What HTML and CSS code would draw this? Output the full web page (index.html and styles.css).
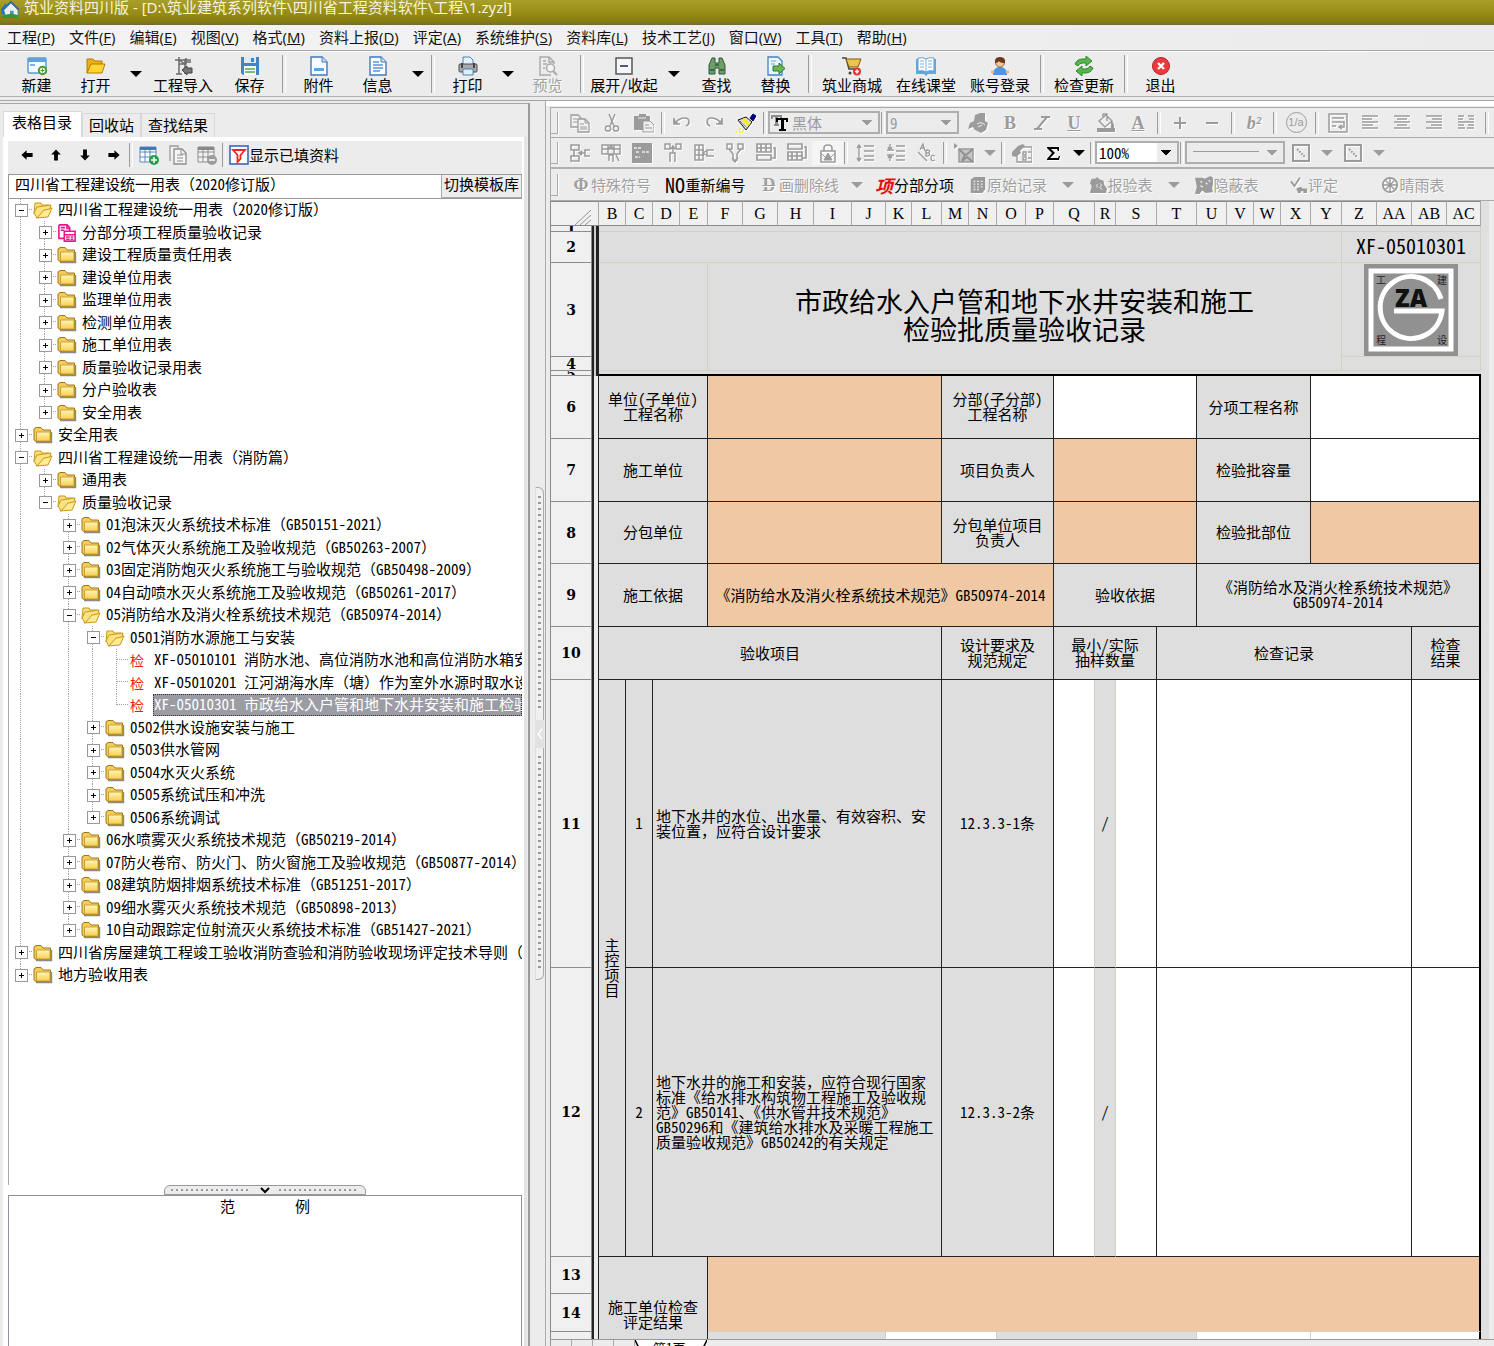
FILE: index.html
```html
<!DOCTYPE html>
<html lang="zh-CN">
<head>
<meta charset="utf-8">
<title>筑业资料四川版</title>
<link rel="stylesheet" href="styles.css">
</head>
<body>
<svg class="defs" aria-hidden="true">
  <defs>
    <linearGradient id="gold" x1="0" y1="0" x2="0" y2="1"><stop offset="0" stop-color="#fff6bc"/><stop offset="1" stop-color="#f8cf4e"/></linearGradient>
  </defs>
  <symbol id="house" viewBox="0 0 20 20"><path d="M0 10l5-6 5 6v6H1z" fill="#1976c8"/><path d="M3 11L11 3l8 8v7H5z" fill="#e8eef4" stroke="#4a7aa0"/><path d="M2 11l9-9 9 9" fill="none" stroke="#3a6a9a" stroke-width="2"/><path d="M10 12h4v6h-4z" fill="#4a8ad0"/><path d="M1 18q9-5 18-1v3H1z" fill="#2f9a35"/></symbol>
  <symbol id="new" viewBox="0 0 20 20"><rect x="1" y="2" width="18" height="15" rx="1" fill="#f6faff" stroke="#5b9bd5" stroke-width="1.5"/><path d="M1 2h18v4H1z" fill="#5fa3dd"/><path d="M3 9h5" stroke="#5b9bd5" stroke-width="1.5"/><circle cx="15.500" cy="14.500" r="3.700" fill="#fff" stroke="#4d9a30" stroke-width="2"/><path d="M13.500 14.500h4M15.500 12.500v4" stroke="#4d9a30"/></symbol>
  <symbol id="open" viewBox="0 0 20 20"><path d="M1 17V3h6l2 2h7v3" fill="#e9b117" stroke="#b47d00"/><path d="M1 17l4-9h14l-3 9z" fill="#ffd433" stroke="#b47d00"/></symbol>
  <symbol id="import" viewBox="0 0 20 20"><path d="M2 4h16M6 1v17M3 18h6M6 8h7V2M12 3v15M12 6h6M6 4l6 4" fill="none" stroke="#6b6b6b" stroke-width="1.500"/><path d="M9 14l5-4v2h5v5h-5v2z" fill="#777" stroke="#444"/></symbol>
  <symbol id="save" viewBox="0 0 20 20"><path d="M1 1h18v18H3l-2-2z" fill="#3f86c8"/><path d="M4 1h12v6H4z" fill="#d9ebf8"/><path d="M11 2h3v4h-3z" fill="#3f86c8"/><path d="M4 10h12v9H4z" fill="#fff"/><path d="M5 13h10M5 16h10" stroke="#52ad3a" stroke-width="1.600"/></symbol>
  <symbol id="doc1" viewBox="0 0 20 20"><path d="M2 1h11l5 5v13H2z" fill="#fafcff" stroke="#3f78bd" stroke-width="1.400"/><path d="M13 1v5h5" fill="#cfe2f5" stroke="#3f78bd"/><path d="M5 12h10v3H5z" fill="#58a6e8"/></symbol>
  <symbol id="doc2" viewBox="0 0 20 20"><path d="M2 1h11l5 5v13H2z" fill="#fafcff" stroke="#3f78bd" stroke-width="1.400"/><path d="M13 1v5h5" fill="#cfe2f5" stroke="#3f78bd"/><path d="M5 6h6M5 9h10M5 12h10M5 15h7" stroke="#5b95d5" stroke-width="1.400"/></symbol>
  <symbol id="print" viewBox="0 0 20 20"><path d="M5 8V1h7l3 3v4" fill="#e5f2ff" stroke="#4a80ba"/><rect x="1" y="8" width="18" height="8" rx="1" fill="#aaa" stroke="#4e4e4e"/><path d="M4 7v5M16 7v5" stroke="#444" stroke-width="2"/><path d="M5 13h10v6H5z" fill="#dcefff" stroke="#4a80ba"/></symbol>
  <symbol id="preview" viewBox="0 0 20 20"><path d="M13 19H2V1h9l5 5v2M11 1v5h5M5 5h3M5 8h4M5 12h2" fill="none" stroke="#a9a9a9" stroke-width="1.400"/><circle cx="12.500" cy="12" r="4" fill="#f3f3f3" stroke="#a9a9a9" stroke-width="1.500"/><path d="M15 15l4 4" stroke="#a9a9a9" stroke-width="2"/></symbol>
  <symbol id="collapse" viewBox="0 0 20 20"><rect x="2" y="2" width="16" height="16" fill="#f5f6fb" stroke="#555" stroke-width="1.500"/><path d="M6 10h8" stroke="#334" stroke-width="1.600"/></symbol>
  <symbol id="find" viewBox="0 0 20 20"><path d="M2 9l3-7h3v5h4V2h3l3 7v9h-6v-6H8v6H2z" fill="#6f9d68" stroke="#2f5a33"/><path d="M3 14h4M13 14h4M8 9h4" stroke="#2f5a33" stroke-width="1.500"/></symbol>
  <symbol id="replace" viewBox="0 0 20 20"><path d="M2 1h10l4 4v14H2z" fill="#eef6ff" stroke="#4084ca" stroke-width="1.300"/><path d="M5 5h5M5 8h4" stroke="#58a0dd"/><path d="M7 10h6V7l6 5.500-6 5.500v-3H7z" fill="#68b552" stroke="#2c7a2a"/></symbol>
  <symbol id="cart" viewBox="0 0 20 20"><path d="M0 2h4l3 11h10" fill="none" stroke="#444" stroke-width="1.500"/><path d="M4 3h15l-3 8H7z" fill="#edc34b" stroke="#7d5a16"/><circle cx="8" cy="17" r="1.500" fill="#444"/><circle cx="15" cy="15.500" r="4" fill="#e53434"/><path d="M13 15.500h4M15 13.500v4" stroke="#fff" stroke-width="1.500"/></symbol>
  <symbol id="book" viewBox="0 0 20 20"><path d="M0 3h20v15h-8l-2 2-2-2H0z" fill="#62a7e0"/><path d="M2 2q5-1 8 1 3-2 8-1v13q-5-1-8 1-3-2-8-1z" fill="#fff" stroke="#5b9fd9"/><path d="M10 3v13M4 5h4M4 8h4M4 11h4M12 5h4M12 8h4M12 11h4" stroke="#78b0df"/></symbol>
  <symbol id="user" viewBox="0 0 20 20"><path d="M3 19q0-8 7-8t7 8z" fill="#4a97e5"/><circle cx="10" cy="6.500" r="4.500" fill="#f3c79a" stroke="#a06432"/><path d="M5 7q-1-6 5-6t5 6q-5 0-6-2-1 2-4 2z" fill="#6a3a19"/><circle cx="2.500" cy="16" r="1.800" fill="#eab681"/><circle cx="17.500" cy="16" r="1.800" fill="#eab681"/></symbol>
  <symbol id="update" viewBox="0 0 20 20"><path d="M1 8q2-5 8-5h3V0l6 5-6 5V7H9q-4 0-5 3z" fill="#56b54c" stroke="#2e8a33"/><path d="M19 12q-2 5-8 5H8v3l-6-5 6-5v3h3q4 0 5-3z" fill="#56b54c" stroke="#2e8a33"/></symbol>
  <symbol id="quit" viewBox="0 0 20 20"><circle cx="10" cy="10" r="8.500" fill="#e83a40" stroke="#b82226"/><path d="M7 7l6 6M13 7l-6 6" stroke="#fff" stroke-width="2.400"/></symbol>
  <symbol id="arr" viewBox="0 0 20 20"><path d="M3 10l6.500-6v3.600H17v4.800H9.500V16z" fill="#000"/></symbol>
  <symbol id="gridadd" viewBox="0 0 20 20"><path d="M1 2h16v15H1zM1 7h16M1 12h16M6 3v14M11 3v14" fill="#fff" stroke="#5a86c0"/><path d="M1 2h16v3H1z" fill="#4275c2"/><circle cx="15" cy="15" r="5" fill="#21a04b"/><path d="M12 15h6M15 12v6" stroke="#fff" stroke-width="1.500"/></symbol>
  <symbol id="gridsub" viewBox="0 0 20 20"><path d="M1 2h16v15H1zM1 7h16M1 12h16M6 3v14M11 3v14" fill="#f2f2f2" stroke="#8d8d8d"/><path d="M1 2h16v3H1z" fill="#888"/><circle cx="15" cy="15" r="5" fill="#9b9b9b"/><path d="M12 15h6" stroke="#fff" stroke-width="1.500"/></symbol>
  <symbol id="copy" viewBox="0 0 20 20"><path d="M1 2h7l3 3v9H1z" fill="#f1f1f1" stroke="#9b9b9b" stroke-width="1.300"/><path d="M8 6h7l4 4v9H8z" fill="#f1f1f1" stroke="#9b9b9b" stroke-width="1.300"/><path d="M3 6h4M3 9h4M10 11h4M10 14h7M10 16h7M15 6v4h4" fill="none" stroke="#9b9b9b"/></symbol>
  <symbol id="sheets" viewBox="0 0 20 20"><path d="M2 16V1h8v2" fill="#f1f1f1" stroke="#9b9b9b" stroke-width="1.300"/><path d="M6 4h8l4 4v11H6z" fill="#f6f6f6" stroke="#8d8d8d" stroke-width="1.300"/><path d="M9 10h6M9 13h6M9 16h6M13 4v5h5" fill="none" stroke="#8d8d8d"/></symbol>
  <symbol id="filter" viewBox="0 0 20 20"><rect x="1" y="1" width="18" height="18" fill="#fff" stroke="#3d68b5" stroke-width="1.600"/><path d="M4 5h12l-4.500 5v4L8.500 17v-7z" fill="#fff" stroke="#f02424" stroke-width="1.800"/></symbol>
  <symbol id="folder" viewBox="0 0 20 18"><path d="M3 16.500h15.500V6" stroke="#8a8a8a" stroke-width="1.400" fill="none"/><path d="M1 14V3l2-1.500h5L10 4h7.500v11.500H3z" fill="#f3cd55" stroke="#a0761c"/><path d="M3.500 6h13.500v9H3.500z" fill="url(#gold)" stroke="#cda036"/></symbol>
  <symbol id="folderopen" viewBox="0 0 20 18"><path d="M1 13L2 2h6l1 2h7l-1 4" fill="#f8df7b" stroke="#c9971c"/><path d="M3 17l5-6 4-3 7-1-4 9z" fill="#ffeb91" stroke="#c9971c"/><path d="M1 12l3-6 14-2-1 4-6 1-7 8z" fill="#fbe382" stroke="#c9971c"/></symbol>
  <symbol id="pink" viewBox="0 0 20 20"><path d="M1 1h9l3 3v4M1 1v15h6M3 4h5M3 7h4M10 1v4h3" fill="none" stroke="#f0148c" stroke-width="1.800"/><path d="M7 8h12v11H7zM7 12h12M9 14.500h4M14 14.500h3M9 17h4M14 17h3" fill="#fff" stroke="#f0148c" stroke-width="1.800"/></symbol>
  <symbol id="cut" viewBox="0 0 20 20"><path d="M7 1l5 12M13 1L8 13" stroke="#9b9b9b" stroke-width="1.500"/><circle cx="6" cy="15.500" r="2.600" fill="none" stroke="#9b9b9b" stroke-width="1.500"/><circle cx="14" cy="15.500" r="2.600" fill="none" stroke="#9b9b9b" stroke-width="1.500"/></symbol>
  <symbol id="paste" viewBox="0 0 20 20"><path d="M0 3h5V1h7v2h4v14H0z" fill="#9b9b9b"/><path d="M4 5h8" stroke="#eee"/><path d="M9 8h7l4 4v7H9z" fill="#eee" stroke="#9b9b9b"/><path d="M11 12h4M11 15h7" stroke="#9b9b9b"/></symbol>
  <symbol id="undo" viewBox="0 0 20 20"><path d="M2 5v6h6M3 10q4-5 10-5 4 0 4 4 0 3-3 4" fill="none" stroke="#9b9b9b" stroke-width="1.600"/><path d="M2 6v5h5z" fill="#9b9b9b"/></symbol>
  <symbol id="brush" viewBox="0 0 20 20"><path d="M14 5l3-4 3 2-3 5z" fill="#000090" stroke="#000060"/><path d="M2 7l8-3 6 5-6 8z" fill="#dedede" stroke="#111"/><path d="M7 6l6 6" stroke="#f8f000" stroke-width="3"/><path d="M4 8l7 7" stroke="#555" stroke-dasharray="1 1"/><path d="M0 19h1M3 19h2M6 19h1M3 16h2M7 17h1" stroke="#f5ee00" stroke-width="1.500"/></symbol>
  <symbol id="tt" viewBox="0 0 20 20"><path d="M1 3h11v4h-2V5H8v7h1v2H4v-2h1V5H3v2H1z" fill="#8c8c8c"/><path d="M6 6h12v4h-2V8h-2v9h2v2H9v-2h2V8H8v2H6z" fill="#000"/></symbol>
  <symbol id="hand" viewBox="0 0 20 20"><path d="M7 2l5-2h5v8l3 2-2 7-5 3-6-3-2-3-5 2 2-6 4-2z" fill="#9b9b9b"/><path d="M9 11q4-3 8 1M10 14l4-2" stroke="#eee" fill="none"/></symbol>
  <symbol id="bucket" viewBox="0 0 20 20"><path d="M3 8l7-6 6 6-7 6zM7 5V1h4v7" fill="#eee" stroke="#9b9b9b" stroke-width="1.400"/><path d="M15 7q4 4 3 8h-3zM1 15h18v4H1z" fill="#9b9b9b"/></symbol>
  <symbol id="plus" viewBox="0 0 20 20"><path d="M4 10h12M10 4v12" stroke="#9b9b9b" stroke-width="2"/></symbol>
  <symbol id="minus" viewBox="0 0 20 20"><path d="M4 10h12" stroke="#9b9b9b" stroke-width="2"/></symbol>
  <symbol id="wrap" viewBox="0 0 20 20"><path d="M1 1h18v18H1zM4 5h12M4 9h12v5h-4M4 13h4M14 12l-3 2 3 2" fill="none" stroke="#9b9b9b" stroke-width="1.500"/></symbol>
  <symbol id="alignl" viewBox="0 0 20 20"><path d="M2 3h16M2 6h10M2 9h16M2 12h11M2 15h16" stroke="#9b9b9b" stroke-width="1.500"/></symbol>
  <symbol id="alignc" viewBox="0 0 20 20"><path d="M2 3h16M5 6h10M2 9h16M5 12h10M2 15h16" stroke="#9b9b9b" stroke-width="1.500"/></symbol>
  <symbol id="alignr" viewBox="0 0 20 20"><path d="M2 3h16M8 6h10M2 9h16M7 12h11M2 15h16" stroke="#9b9b9b" stroke-width="1.500"/></symbol>
  <symbol id="alignj" viewBox="0 0 20 20"><path d="M2 3h6M12 3h6M2 6h5M13 6h5M2 9h16M2 12h6M12 12h6M2 15h7M11 15h7" stroke="#9b9b9b" stroke-width="1.500"/></symbol>
  <symbol id="g1" viewBox="0 0 20 20"><path d="M1 2h8v5H1zM1 13h8v5H1zM4 7v6M20 7h-5v6h5M9 10h6M12 8l-3 2 3 2" fill="none" stroke="#9b9b9b" stroke-width="1.600"/></symbol>
  <symbol id="g2" viewBox="0 0 20 20"><path d="M1 2h18v9H1zM1 6h18M7 2v9M13 2v9M7 6l3-3 3 3M8 18v-6h4v7M15 12l3 6" fill="none" stroke="#9b9b9b" stroke-width="1.500"/></symbol>
  <symbol id="g3" viewBox="0 0 20 20"><path d="M0 0h20v20H0z" fill="#9b9b9b"/><path d="M2 5h7M4 9h4M10 9h7M3 14h5" stroke="#eee" stroke-width="1.500" stroke-dasharray="3 1"/></symbol>
  <symbol id="g4" viewBox="0 0 20 20"><path d="M2 1h5v5H2zM13 1h5v5h-5zM7 19v-9h5v9M10 10V4M8 6l2-3 2 3" fill="none" stroke="#9b9b9b" stroke-width="1.500"/></symbol>
  <symbol id="g5" viewBox="0 0 20 20"><path d="M1 2h8v15H1zM5 2v15M1 7h9M1 12h9M20 7h-7v6h7M12 8l-3 2 3 2" fill="none" stroke="#9b9b9b" stroke-width="1.500"/></symbol>
  <symbol id="g6" viewBox="0 0 20 20"><path d="M2 1h5v5H2zM13 1h5v5h-5zM4 6l4 5v6h4v-6l4-5M7 15l3 4 3-4" fill="none" stroke="#9b9b9b" stroke-width="1.500"/></symbol>
  <symbol id="g7" viewBox="0 0 20 20"><path d="M1 1h14v8H1zM1 5h14M5 1v8M10 1v8M1 12h14v5H1zM17 5h2v10h-3" fill="none" stroke="#9b9b9b" stroke-width="1.700"/></symbol>
  <symbol id="g8" viewBox="0 0 20 20"><path d="M1 1h14v5H1zM1 9h14v8H1zM1 13h14M5 9v8M10 9v8M17 4h2v11h-3" fill="none" stroke="#9b9b9b" stroke-width="1.700"/></symbol>
  <symbol id="lock" viewBox="0 0 20 20"><path d="M6 8V5q0-3 4-3t4 3v3M3 8h14v11H3z" fill="none" stroke="#9b9b9b" stroke-width="1.600"/><path d="M6 17l4-7 4 7zM4 11l3 3M16 11l-3 3" stroke="#9b9b9b" fill="#9b9b9b"/></symbol>
  <symbol id="ls1" viewBox="0 0 20 20"><path d="M4 2v16M2 5l2-3 2 3M2 15l2 3 2-3M9 3h10M9 8h10M9 13h10M9 17h10" fill="none" stroke="#9b9b9b" stroke-width="1.400"/></symbol>
  <symbol id="ls2" viewBox="0 0 20 20"><path d="M1 7h7M4 1v6M2 4l2 3 2-3M1 12h7M4 18v-6M2 15l2-3 2 3M10 3h9M10 8h9M10 13h9M10 17h9" fill="none" stroke="#9b9b9b" stroke-width="1.400"/></symbol>
  <symbol id="abc" viewBox="0 0 20 20"><path d="M3 7l3-6 2 7M4 5h3M9 7v6q5 0 3-3 2-3-3-3M9 10h3M18 13q-4-2-4 2t4 2M1 9l9 9" fill="none" stroke="#9b9b9b" stroke-width="1.300"/></symbol>
  <symbol id="pic" viewBox="0 0 20 20"><path d="M0 0l4 3-4 3z" fill="#9b9b9b"/><path d="M5 6h14v13H5z" fill="#c4c4c4" stroke="#9b9b9b" stroke-width="1.500"/><path d="M5 6l6 6-3 6 5-4 6 5M19 6l-7 6" fill="none" stroke="#8f8f8f" stroke-width="1.800"/></symbol>
  <symbol id="form" viewBox="0 0 20 20"><path d="M8 4h12v15H5v-6M11 9h3v3h-3zM16 9h3M11 14h3v3h-3zM16 15h3" fill="none" stroke="#9b9b9b" stroke-width="1.400"/><path d="M0 9l6-6 5-2 2 2-5 5 1 2-5 4-4-1z" fill="#9b9b9b"/></symbol>
  <symbol id="sigma" viewBox="0 0 20 20"><path d="M4 4h12v4h-1l-1-2H8l4 4-5 5h8l1-2h1l-1 4H4v-1l5-6-5-5z" fill="#000"/></symbol>
  <symbol id="cell" viewBox="0 0 20 20"><path d="M2 2h16v16H2z" fill="none" stroke="#9b9b9b" stroke-width="2"/><path d="M6 6l8 8" stroke="#9b9b9b" stroke-width="2" stroke-dasharray="2 1"/></symbol>
  <symbol id="book2" viewBox="0 0 20 20"><path d="M2 4l4-3h12v14l-3 4H2z" fill="#9b9b9b"/><path d="M5 6h2M9 6h2M13 6h2M5 9h2M9 9h2M13 9h2M5 12h2M9 12h2M5 15h2M9 15h2M13 12h2" stroke="#eee" stroke-width="1.500"/></symbol>
  <symbol id="seal" viewBox="0 0 20 20"><path d="M3 3h4l2-2 3 3 4 1 1 5 3 4-1 5H4l-3 0 2-8-2-3z" fill="#9b9b9b"/><path d="M9 9v4M12 8l2 2-2 3 3 2" stroke="#eee" fill="none"/></symbol>
  <symbol id="hide" viewBox="0 0 20 20"><path d="M0 2h8l3 1 6-3 3 2v7l-1 5 1 4-8 1-4-3-3 4H0l2-8z" fill="#9b9b9b"/><path d="M6 6l2 1M12 8l2 1M6 11l3 1M15 5l2 1" stroke="#eee" stroke-width="1.500"/></symbol>
  <symbol id="check" viewBox="0 0 20 20"><path d="M1 6l4 5 6-9" fill="none" stroke="#9b9b9b" stroke-width="2"/><path d="M7 14l5-2 2 2h5v5h-4v-2h-3v2H9z" fill="#9b9b9b"/></symbol>
  <symbol id="globe" viewBox="0 0 20 20"><circle cx="10" cy="10" r="8" fill="none" stroke="#9b9b9b" stroke-width="2"/><path d="M10 2v16M2 10h16M5 5l10 10M15 5L5 15" stroke="#9b9b9b" stroke-width="1.500"/></symbol>
</svg>

<header class="titlebar"><svg class="ic"><use href="#house"/></svg><span>筑业资料四川版 - [D:\筑业建筑系列软件\四川省工程资料软件\工程\1.zyzl]</span></header>
<nav class="menu">
  <a href="#">工程(<u>P</u>)</a><a href="#">文件(<u>F</u>)</a><a href="#">编辑(<u>E</u>)</a><a href="#">视图(<u>V</u>)</a><a href="#">格式(<u>M</u>)</a><a href="#">资料上报(<u>D</u>)</a><a href="#">评定(<u>A</u>)</a><a href="#">系统维护(<u>S</u>)</a><a href="#">资料库(<u>L</u>)</a><a href="#">技术工艺(<u>J</u>)</a><a href="#">窗口(<u>W</u>)</a><a href="#">工具(<u>T</u>)</a><a href="#">帮助(<u>H</u>)</a>
</nav>
<div class="toolbar">
  <button class="tb"><svg class="ic"><use href="#new"/></svg>新建</button>
  <button class="tb"><svg class="ic"><use href="#open"/></svg>打开</button>
  <button class="drop" aria-label="打开选项"></button>
  <button class="tb wide"><svg class="ic"><use href="#import"/></svg>工程导入</button>
  <button class="tb"><svg class="ic"><use href="#save"/></svg>保存</button>
  <i class="sep"></i>
  <button class="tb"><svg class="ic"><use href="#doc1"/></svg>附件</button>
  <button class="tb"><svg class="ic"><use href="#doc2"/></svg>信息</button>
  <button class="drop" aria-label="信息选项"></button>
  <i class="sep"></i>
  <button class="tb"><svg class="ic"><use href="#print"/></svg>打印</button>
  <button class="drop" aria-label="打印选项"></button>
  <button class="tb off"><svg class="ic"><use href="#preview"/></svg>预览</button>
  <i class="sep"></i>
  <button class="tb wide"><svg class="ic"><use href="#collapse"/></svg>展开/收起</button>
  <button class="drop big" aria-label="展开选项"></button>
  <button class="tb"><svg class="ic"><use href="#find"/></svg>查找</button>
  <button class="tb"><svg class="ic"><use href="#replace"/></svg>替换</button>
  <i class="sep"></i>
  <button class="tb wide"><svg class="ic"><use href="#cart"/></svg>筑业商城</button>
  <button class="tb wide"><svg class="ic"><use href="#book"/></svg>在线课堂</button>
  <button class="tb wide"><svg class="ic"><use href="#user"/></svg>账号登录</button>
  <i class="sep"></i>
  <button class="tb wide"><svg class="ic"><use href="#update"/></svg>检查更新</button>
  <i class="sep"></i>
  <button class="tb"><svg class="ic"><use href="#quit"/></svg>退出</button>
</div>

<main class="main">
  <aside class="side">
    <div class="tabs"><button class="tab on">表格目录</button><button class="tab">回收站</button><button class="tab">查找结果</button></div>
    <div class="page">
      <div class="sidebar-tools">
        <button class="mini" aria-label="左移"><svg class="ic s"><use href="#arr"/></svg></button>
        <button class="mini" aria-label="上移"><svg class="ic s r1"><use href="#arr"/></svg></button>
        <button class="mini" aria-label="下移"><svg class="ic s r3"><use href="#arr"/></svg></button>
        <button class="mini" aria-label="右移"><svg class="ic s r2"><use href="#arr"/></svg></button>
        <i class="sep tight"></i>
        <button class="mini" aria-label="添加表"><svg class="ic"><use href="#gridadd"/></svg></button>
        <button class="mini" aria-label="复制表"><svg class="ic"><use href="#sheets"/></svg></button>
        <button class="mini" aria-label="删除表"><svg class="ic"><use href="#gridsub"/></svg></button>
        <i class="sep tight"></i>
        <button class="filled"><svg class="ic"><use href="#filter"/></svg>显示已填资料</button>
      </div>
      <div class="template"><input aria-label="模板库" value="四川省工程建设统一用表（2020修订版）"><button>切换模板库</button></div>
      <ul class="tree">
        <li><button class="ex open"></button><svg class="fi"><use href="#folderopen"/></svg><span>四川省工程建设统一用表（2020修订版）</span></li>
        <li><i class="g"></i><button class="ex"></button><svg class="fi"><use href="#pink"/></svg><span>分部分项工程质量验收记录</span></li>
        <li><i class="g"></i><button class="ex"></button><svg class="fi"><use href="#folder"/></svg><span>建设工程质量责任用表</span></li>
        <li><i class="g"></i><button class="ex"></button><svg class="fi"><use href="#folder"/></svg><span>建设单位用表</span></li>
        <li><i class="g"></i><button class="ex"></button><svg class="fi"><use href="#folder"/></svg><span>监理单位用表</span></li>
        <li><i class="g"></i><button class="ex"></button><svg class="fi"><use href="#folder"/></svg><span>检测单位用表</span></li>
        <li><i class="g"></i><button class="ex"></button><svg class="fi"><use href="#folder"/></svg><span>施工单位用表</span></li>
        <li><i class="g"></i><button class="ex"></button><svg class="fi"><use href="#folder"/></svg><span>质量验收记录用表</span></li>
        <li><i class="g"></i><button class="ex"></button><svg class="fi"><use href="#folder"/></svg><span>分户验收表</span></li>
        <li><i class="g"></i><button class="ex last"></button><svg class="fi"><use href="#folder"/></svg><span>安全用表</span></li>
        <li><button class="ex"></button><svg class="fi"><use href="#folder"/></svg><span>安全用表</span></li>
        <li><button class="ex open"></button><svg class="fi"><use href="#folderopen"/></svg><span>四川省工程建设统一用表（消防篇）</span></li>
        <li><i class="g"></i><button class="ex"></button><svg class="fi"><use href="#folder"/></svg><span>通用表</span></li>
        <li><i class="g"></i><button class="ex open last"></button><svg class="fi"><use href="#folderopen"/></svg><span>质量验收记录</span></li>
        <li><i class="g"></i><i class="b"></i><button class="ex"></button><svg class="fi"><use href="#folder"/></svg><span>01泡沫灭火系统技术标准（GB50151-2021）</span></li>
        <li><i class="g"></i><i class="b"></i><button class="ex"></button><svg class="fi"><use href="#folder"/></svg><span>02气体灭火系统施工及验收规范（GB50263-2007）</span></li>
        <li><i class="g"></i><i class="b"></i><button class="ex"></button><svg class="fi"><use href="#folder"/></svg><span>03固定消防炮灭火系统施工与验收规范（GB50498-2009）</span></li>
        <li><i class="g"></i><i class="b"></i><button class="ex"></button><svg class="fi"><use href="#folder"/></svg><span>04自动喷水灭火系统施工及验收规范（GB50261-2017）</span></li>
        <li><i class="g"></i><i class="b"></i><button class="ex open"></button><svg class="fi"><use href="#folderopen"/></svg><span>05消防给水及消火栓系统技术规范（GB50974-2014）</span></li>
        <li><i class="g"></i><i class="b"></i><i class="g"></i><button class="ex open"></button><svg class="fi"><use href="#folderopen"/></svg><span>0501消防水源施工与安装</span></li>
        <li><i class="g"></i><i class="b"></i><i class="g"></i><i class="g"></i><i class="t"></i><b class="jian">检</b><span>XF-05010101 消防水池、高位消防水池和高位消防水箱安装</span></li>
        <li><i class="g"></i><i class="b"></i><i class="g"></i><i class="g"></i><i class="t"></i><b class="jian">检</b><span>XF-05010201 江河湖海水库（塘）作为室外水源时取水设施</span></li>
        <li><i class="g"></i><i class="b"></i><i class="g"></i><i class="g"></i><i class="t last"></i><b class="jian">检</b><span class="sel">XF-05010301 市政给水入户管和地下水井安装和施工检验批</span></li>
        <li><i class="g"></i><i class="b"></i><i class="g"></i><button class="ex"></button><svg class="fi"><use href="#folder"/></svg><span>0502供水设施安装与施工</span></li>
        <li><i class="g"></i><i class="b"></i><i class="g"></i><button class="ex"></button><svg class="fi"><use href="#folder"/></svg><span>0503供水管网</span></li>
        <li><i class="g"></i><i class="b"></i><i class="g"></i><button class="ex"></button><svg class="fi"><use href="#folder"/></svg><span>0504水灭火系统</span></li>
        <li><i class="g"></i><i class="b"></i><i class="g"></i><button class="ex"></button><svg class="fi"><use href="#folder"/></svg><span>0505系统试压和冲洗</span></li>
        <li><i class="g"></i><i class="b"></i><i class="g"></i><button class="ex last"></button><svg class="fi"><use href="#folder"/></svg><span>0506系统调试</span></li>
        <li><i class="g"></i><i class="b"></i><button class="ex"></button><svg class="fi"><use href="#folder"/></svg><span>06水喷雾灭火系统技术规范（GB50219-2014）</span></li>
        <li><i class="g"></i><i class="b"></i><button class="ex"></button><svg class="fi"><use href="#folder"/></svg><span>07防火卷帘、防火门、防火窗施工及验收规范（GB50877-2014）</span></li>
        <li><i class="g"></i><i class="b"></i><button class="ex"></button><svg class="fi"><use href="#folder"/></svg><span>08建筑防烟排烟系统技术标准（GB51251-2017）</span></li>
        <li><i class="g"></i><i class="b"></i><button class="ex"></button><svg class="fi"><use href="#folder"/></svg><span>09细水雾灭火系统技术规范（GB50898-2013）</span></li>
        <li><i class="g"></i><i class="b"></i><button class="ex last"></button><svg class="fi"><use href="#folder"/></svg><span>10自动跟踪定位射流灭火系统技术标准（GB51427-2021）</span></li>
        <li><button class="ex"></button><svg class="fi"><use href="#folder"/></svg><span>四川省房屋建筑工程竣工验收消防查验和消防验收现场评定技术导则（试行）</span></li>
        <li><button class="ex last"></button><svg class="fi"><use href="#folder"/></svg><span>地方验收用表</span></li>
      </ul>
      <div class="hsplit"><div class="hgrip"><i class="dots"></i><svg viewBox="0 0 10 7" width="10" height="7"><path d="M1 1l4 4 4-4" fill="none" stroke="#000" stroke-width="2"/></svg><i class="dots"></i></div></div>
      <section class="sample"><span>范</span><span>例</span></section>
    </div>
  </aside>
  <div class="vsplit"><div class="vgrip"><i class="dots"></i><svg viewBox="0 0 9 28" width="9" height="28"><path d="M7 9l-4 5 4 5" fill="none" stroke="#fff" stroke-width="1.500"/></svg><i class="dots"></i></div></div>

  <section class="work">
    <div class="bar">
      <i class="grip"></i>
      <button class="ib" aria-label="复制"><svg class="ic"><use href="#copy"/></svg></button>
      <button class="ib" aria-label="剪切"><svg class="ic"><use href="#cut"/></svg></button>
      <button class="ib" aria-label="粘贴"><svg class="ic"><use href="#paste"/></svg></button>
      <i class="sep tight"></i>
      <button class="ib" aria-label="撤销"><svg class="ic"><use href="#undo"/></svg></button>
      <button class="ib" aria-label="重做"><svg class="ic flip"><use href="#undo"/></svg></button>
      <button class="ib" aria-label="格式刷"><svg class="ic"><use href="#brush"/></svg></button>
      <i class="sep tight"></i>
      <label class="font"><svg class="ic"><use href="#tt"/></svg><select class="cb c-font" aria-label="字体"><option>黑体</option></select></label>
      <i class="sep tight"></i>
      <select class="cb c-size" aria-label="字号"><option>9</option></select>
      <button class="ib" aria-label="拾取"><svg class="ic"><use href="#hand"/></svg></button>
      <button class="ib ltr">B</button>
      <button class="ib" aria-label="斜体"><svg class="ic" viewBox="0 0 20 20"><path d="M9 4h9M2 16h8M15 4L5 16" stroke="#9b9b9b" stroke-width="2"/></svg></button>
      <button class="ib ltr"><u>U</u></button>
      <button class="ib" aria-label="填充色"><svg class="ic"><use href="#bucket"/></svg></button>
      <button class="ib ltr"><u>A</u></button>
      <i class="sep"></i>
      <button class="ib" aria-label="增大"><svg class="ic"><use href="#plus"/></svg></button>
      <button class="ib" aria-label="减小"><svg class="ic"><use href="#minus"/></svg></button>
      <i class="sep"></i>
      <button class="ib ltr"><em>b²</em></button>
      <i class="sep"></i>
      <button class="ib"><span class="frac">1/a</span></button>
      <i class="sep"></i>
      <button class="ib" aria-label="自动换行"><svg class="ic"><use href="#wrap"/></svg></button>
      <button class="ib" aria-label="左对齐"><svg class="ic"><use href="#alignl"/></svg></button>
      <button class="ib" aria-label="居中"><svg class="ic"><use href="#alignc"/></svg></button>
      <button class="ib" aria-label="右对齐"><svg class="ic"><use href="#alignr"/></svg></button>
      <button class="ib" aria-label="分散对齐"><svg class="ic"><use href="#alignj"/></svg></button>
      <i class="sep"></i>
    </div>
    <div class="bar">
      <i class="grip"></i>
      <button class="ib n" aria-label="插入行"><svg class="ic"><use href="#g1"/></svg></button>
      <button class="ib n" aria-label="插入列"><svg class="ic"><use href="#g2"/></svg></button>
      <button class="ib n" aria-label="单元格"><svg class="ic"><use href="#g3"/></svg></button>
      <button class="ib n" aria-label="拆分"><svg class="ic"><use href="#g4"/></svg></button>
      <button class="ib n" aria-label="删除行"><svg class="ic"><use href="#g5"/></svg></button>
      <button class="ib n" aria-label="合并"><svg class="ic"><use href="#g6"/></svg></button>
      <button class="ib n" aria-label="追加"><svg class="ic"><use href="#g7"/></svg></button>
      <button class="ib n" aria-label="复制行"><svg class="ic"><use href="#g8"/></svg></button>
      <button class="ib n lit" aria-label="锁定"><svg class="ic"><use href="#lock"/></svg></button>
      <i class="sep tight"></i>
      <button class="ib n" aria-label="增加行距"><svg class="ic"><use href="#ls1"/></svg></button>
      <button class="ib n" aria-label="减小行距"><svg class="ic"><use href="#ls2"/></svg></button>
      <button class="ib n" aria-label="文字方向"><svg class="ic"><use href="#abc"/></svg></button>
      <i class="sep tight"></i>
      <button class="ib n" aria-label="图片"><svg class="ic"><use href="#pic"/></svg></button>
      <button class="drop off" aria-label="图片选项"></button>
      <i class="sep tight"></i>
      <button class="ib n" aria-label="表单"><svg class="ic"><use href="#form"/></svg></button>
      <button class="ib n" aria-label="求和"><svg class="ic"><use href="#sigma"/></svg></button>
      <button class="drop" aria-label="求和选项"></button>
      <i class="sep tight"></i>
      <select class="cb c-zoom" aria-label="缩放"><option>100%</option></select>
      <i class="sep tight"></i>
      <select class="cb c-line" aria-label="线型"><option> </option></select>
      <button class="ib n" aria-label="斜线一"><svg class="ic"><use href="#cell"/></svg></button>
      <button class="drop off" aria-label="斜线一选项"></button>
      <button class="ib n" aria-label="斜线二"><svg class="ic"><use href="#cell"/></svg></button>
      <button class="drop off" aria-label="斜线二选项"></button>
    </div>
    <div class="bar">
      <i class="grip"></i>
      <button class="lb off"><b class="phi">Φ</b>特殊符号</button>
      <button class="lb"><span class="no">NO</span>重新编号</button>
      <button class="lb off"><b class="phi"><s>D</s></b>画删除线</button>
      <button class="drop off" aria-label="画删除线选项"></button>
      <button class="lb"><b class="xiang">项</b>分部分项</button>
      <button class="lb off"><svg class="ic"><use href="#book2"/></svg>原始记录</button>
      <button class="drop off big" aria-label="原始记录选项"></button>
      <button class="lb off short"><svg class="ic"><use href="#seal"/></svg>报验表</button>
      <button class="drop off big" aria-label="报验表选项"></button>
      <button class="lb off short"><svg class="ic"><use href="#hide"/></svg>隐蔽表</button>
      <button class="lb off"><svg class="ic"><use href="#check"/></svg>评定</button>
      <button class="lb off last"><svg class="ic"><use href="#globe"/></svg>晴雨表</button>
    </div>

    <div class="sheet">
      <table>
        <colgroup><col class="w41"><col class="w7"><col class="w27"><col class="w27"><col class="w27"><col class="w28"><col class="w35"><col class="w35"><col class="w36"><col class="w38"><col class="w34"><col class="w26"><col class="w30"><col class="w27"><col class="w28"><col class="w29"><col class="w28"><col class="w41"><col class="w21"><col class="w41"><col class="w40"><col class="w30"><col class="w27"><col class="w27"><col class="w30"><col class="w31"><col class="w35"><col class="w35"><col class="w35"><col class="w34"></colgroup>
        <thead><tr><th colspan="2" class="corner"><svg width="16" height="16" viewBox="0 0 16 16"><path d="M0 16L16 1M5 16L16 6M10 16l6-5" stroke="#999"/></svg></th><th>B</th><th>C</th><th>D</th><th>E</th><th>F</th><th>G</th><th>H</th><th>I</th><th>J</th><th>K</th><th>L</th><th>M</th><th>N</th><th>O</th><th>P</th><th>Q</th><th>R</th><th>S</th><th>T</th><th>U</th><th>V</th><th>W</th><th>X</th><th>Y</th><th>Z</th><th>AA</th><th>AB</th><th>AC</th></tr></thead>
        <tbody>
          <tr class="h6"><th><div>1</div></th><td rowspan="5" class="strip dark"></td><td colspan="28" class="soft"></td></tr>
          <tr class="h31"><th>2</th><td colspan="24" class="soft"></td><td colspan="4" class="soft code">XF-05010301</td></tr>
          <tr class="h94"><th>3</th><td colspan="4" rowspan="2" class="soft"></td><td colspan="20" rowspan="2" class="soft title">市政给水入户管和地下水井安装和施工<br>检验批质量验收记录</td><td colspan="4" class="soft logo"><svg width="94" height="92" viewBox="0 0 94 92"><path d="M0 0h94v92H0z" fill="#919191"/><path d="M7 7h80v78H7z" fill="none" stroke="#fff" stroke-width="5"/><path d="M77 35A31 31 0 1 0 78 47H30" fill="none" stroke="#fff" stroke-width="5"/><g font-family="Noto Sans CJK SC, sans-serif"><text x="31" y="43" font-size="24" font-weight="800" fill="#111" font-family="Open Sans, sans-serif">ZA</text><g font-size="10" fill="#222"><text x="12" y="20">工</text><text x="73" y="20">建</text><text x="12" y="80">程</text><text x="73" y="80">设</text></g></g></svg></td></tr>
          <tr class="h14"><th><div>4</div></th><td colspan="4" class="soft"></td></tr>
          <tr class="h5"><th><div>5</div></th><td colspan="28" class="top"></td></tr>
          <tr class="h63"><th>6</th><td rowspan="10" class="strip"></td><td colspan="4">单位(子单位)<br>工程名称</td><td colspan="7" class="o"></td><td colspan="4">分部(子分部)<br>工程名称</td><td colspan="4" class="w"></td><td colspan="4">分项工程名称</td><td colspan="5" class="w e"></td></tr>
          <tr class="h63"><th>7</th><td colspan="4">施工单位</td><td colspan="7" class="o"></td><td colspan="4">项目负责人</td><td colspan="4" class="o"></td><td colspan="4">检验批容量</td><td colspan="5" class="w e"></td></tr>
          <tr class="h62"><th>8</th><td colspan="4">分包单位</td><td colspan="7" class="o"></td><td colspan="4">分包单位项目<br>负责人</td><td colspan="4" class="o"></td><td colspan="4">检验批部位</td><td colspan="5" class="o e"></td></tr>
          <tr class="h63"><th>9</th><td colspan="4">施工依据</td><td colspan="11" class="o">《消防给水及消火栓系统技术规范》GB50974-2014</td><td colspan="4">验收依据</td><td colspan="9" class="e">《消防给水及消火栓系统技术规范》<br>GB50974-2014</td></tr>
          <tr class="h53"><th>10</th><td colspan="11">验收项目</td><td colspan="4">设计要求及<br>规范规定</td><td colspan="3">最小/实际<br>抽样数量</td><td colspan="8">检查记录</td><td colspan="2" class="e">检查<br>结果</td></tr>
          <tr class="h288"><th>11</th><td rowspan="2"><div class="vert">主控项目</div></td><td>1</td><td colspan="9" class="l">地下水井的水位、出水量、有效容积、安装位置，应符合设计要求</td><td colspan="4">12.3.3-1条</td><td class="w nr"></td><td class="nr">/</td><td class="w"></td><td colspan="8" class="w"></td><td colspan="2" class="w e"></td></tr>
          <tr class="h289"><th>12</th><td>2</td><td colspan="9" class="l">地下水井的施工和安装，应符合现行国家标准《给水排水构筑物工程施工及验收规范》GB50141、《供水管井技术规范》GB50296和《建筑给水排水及采暖工程施工质量验收规范》GB50242的有关规定</td><td colspan="4">12.3.3-2条</td><td class="w nr"></td><td class="nr">/</td><td class="w"></td><td colspan="8" class="w"></td><td colspan="2" class="w e"></td></tr>
          <tr class="h37"><th>13</th><td colspan="4" rowspan="3">施工单位检查<br>评定结果</td><td colspan="24" rowspan="2" class="o e nb"></td></tr>
          <tr class="h38"><th>14</th></tr>
          <tr class="h42"><th></th><td colspan="5" class="soft"></td><td colspan="4" class="soft w"></td><td colspan="6" class="soft"></td><td colspan="4" class="soft w"></td><td colspan="5" class="w e"></td></tr>
        </tbody>
      </table>
    </div>
    <div class="sheettabs"><i></i><i></i><i></i><i></i><button class="stab"><svg width="72" height="16" viewBox="0 0 72 16"><path d="M0 0h72l-8 16H8z" fill="#fff"/><path d="M0 0l8 16M72 0l-8 16" stroke="#000" stroke-width="1.500"/></svg><span>第1页</span></button></div>
  </section>
</main>
</body>
</html>
```
FILE: styles.css
```css
* { box-sizing: border-box; }
html, body { height: 100%; }
body {
  margin: 0;
  display: flex;
  flex-direction: column;
  overflow: hidden;
  background: #ececec;
  color: #000;
  font: 15px/20px "Noto Sans Mono CJK SC", "Noto Sans CJK SC", sans-serif;
}
button, input, select { font: inherit; color: inherit; }
button { padding: 0; border: 0; background: none; white-space: nowrap; }
i { font-style: normal; }
.defs { position: absolute; width: 0; height: 0; }
.ic { width: 20px; height: 20px; flex: none; }

.titlebar {
  flex: none;
  height: 25px;
  display: flex;
  gap: 4px;
  overflow: hidden;
  background: linear-gradient(#a89f2c, #9a9017 45%, #857b10 88%, #6e6a3c);
  color: #f6f4dc;
  font-family: "Noto Sans", "Noto Sans CJK SC", sans-serif;
  line-height: 14px;
  white-space: nowrap;
}
.titlebar .ic { height: 18px; }

.menu {
  flex: none;
  height: 26px;
  display: flex;
  gap: 14px;
  padding: 1px 7px 0;
  border-bottom: 1px solid #a8a8a8;
  background: linear-gradient(90deg, #f4f4f4, #ebebeb);
  font-family: "Open Sans", "Noto Sans CJK SC", sans-serif;
  line-height: 22px;
  white-space: nowrap;
}
.menu a { color: #111; text-decoration: none; }

.toolbar {
  flex: none;
  height: 46px;
  display: flex;
  align-items: center;
  padding-left: 7px;
  border-top: 1px solid #fff;
  border-bottom: 1px solid #b0b0b0;
}
.tb {
  width: 59px;
  height: 44px;
  display: flex;
  flex-direction: column;
  align-items: center;
  padding-top: 4px;
  line-height: 18px;
}
.tb.wide { width: 74px; }
.off { color: #a0a0a0; text-shadow: 1px 1px 0 #fff; }
.drop { width: 21px; height: 20px; flex: none; display: flex; align-items: center; justify-content: center; }
.drop::before { content: ""; border: 6px solid transparent; border-top-color: #000; border-bottom: 0; }
.drop.off::before { border-top-color: #9b9b9b; }
.drop.big { width: 26px; }
.sep { width: 10px; height: 38px; flex: none; display: flex; justify-content: center; }
.sep::before { content: ""; width: 2px; border-left: 1px solid #9d9d9d; border-right: 1px solid #fff; }
.sep.tight { width: 6px; }

.main { flex: 1; min-height: 0; display: flex; margin-top: 3px; border-top: 1px solid #a6a6a6; }

.side {
  flex: 0 0 530px;
  min-width: 0;
  display: flex;
  flex-direction: column;
  padding: 7px 0 0 3px;
  margin-top: 2px;
  border-top: 1px solid #a6a6a6;
  border-right: 2px solid #9a9a9a;
}
.tabs { flex: none; display: flex; align-items: flex-end; height: 26px; }
.tab { height: 24px; padding: 0 6px 2px; border: 1px solid #d8d8d8; border-bottom: 0; }
.tab.on { height: 26px; padding: 0 9px 6px 8px; background: #fff; }
.page {
  flex: 1;
  min-height: 0;
  display: flex;
  flex-direction: column;
  padding: 4px 2px 0 5px;
  background: #fff;
  margin-right: 1px;
  border-right: 3px solid #e4e4e4;
}
.sidebar-tools { flex: none; height: 33px; display: flex; align-items: center; padding: 0 0 5px 4px; background: #ececec; }
.sidebar-tools .sep { height: 24px; }
.mini { width: 29px; height: 24px; display: flex; align-items: center; justify-content: center; }
.ic.s { width: 16px; height: 16px; }
.r1 { transform: rotate(90deg); }
.r2 { transform: rotate(180deg); }
.r3 { transform: rotate(270deg); }
.filled { display: flex; align-items: center; padding-left: 2px; }
.template { flex: none; display: flex; height: 25px; border: 1px solid #999; border-right: 0; }
.template input { flex: 1; min-width: 0; padding: 0 6px 6px; border: 0; background: #fff; outline: 0; }
.template button { width: 81px; border: 1px solid #aaa; border-top: 0; background: #ededed; line-height: 18px; padding-bottom: 4px; }

.tree {
  flex: 0 0 986px;
  margin: 0;
  padding: 0;
  list-style: none;
  overflow: hidden;
  border-left: 1px solid #aaa;
}
.tree li { height: 22px; display: flex; align-items: center; white-space: nowrap; }
.tree li:nth-child(even) { height: 23px; }
.tree li > span { flex: 0 1 auto; min-width: 0; overflow: hidden; padding-left: 1px; line-height: 20px; padding-bottom: 2px; }
.tree i, .ex { flex: none; width: 24px; height: 100%; background: repeating-linear-gradient(#a0a0a0 0 1px, transparent 1px 2px) 11px 0 / 1px 100% no-repeat; }
.tree .b { background: none; }
.ex, .t { position: relative; }
.ex.last, .tree .t.last { background-size: 1px 50%; }
.t::before, .ex::after { content: ""; position: absolute; left: 12px; right: 0; top: 10px; height: 1px; background: repeating-linear-gradient(90deg, #a0a0a0 0 1px, transparent 1px 2px); }
.ex::before {
  content: "";
  position: absolute;
  z-index: 1;
  left: 6px;
  top: 5px;
  width: 11px;
  height: 11px;
  border: 1px solid #999;
  background: linear-gradient(#000, #000) center / 5px 1px no-repeat, linear-gradient(#000, #000) center / 1px 5px no-repeat, #fff;
}
.ex.open::before { background: linear-gradient(#000, #000) center / 5px 1px no-repeat, #fff; }
.fi { width: 20px; height: 18px; flex: none; margin-right: 4px; }
.jian { flex: none; width: 24px; padding-left: 1px; color: #f01818; font-weight: 500; font-size: 14px; }
.tree li > .sel { background: #9c9ca4; color: #fff; outline: 1px dotted #333; outline-offset: -1px; }

.hsplit { flex: none; height: 10px; display: flex; justify-content: center; }
.hgrip {
  width: 202px;
  display: flex;
  align-items: center;
  justify-content: space-between;
  padding: 0 6px;
  border: 1px solid #999;
  border-radius: 6px 6px 0 0;
  background: #ececec;
}
.hgrip .dots { width: 80px; height: 2px; background: repeating-linear-gradient(90deg, #999 0 2px, transparent 2px 5px); }
.sample {
  flex: 1;
  display: flex;
  justify-content: center;
  gap: 60px;
  border: 1px solid #8d939c;
  border-bottom: 0;
}

.vsplit { flex: 0 0 16px; padding: 386px 1px 0 5px; border-right: 1px solid #aaa; }
.vgrip {
  height: 493px;
  width: 9px;
  display: flex;
  flex-direction: column;
  align-items: center;
  border: 1px solid #aaa;
  border-left-color: #ddd;
  border-radius: 0 6px 6px 0;
  background: #f0f0f0;
}
.vgrip svg { background: #e2e2e2; }
.vgrip .dots { flex: 1; width: 3px; margin: 8px 0; background: repeating-linear-gradient(#999 0 2px, transparent 2px 6px); }

.work { flex: 1; min-width: 0; display: flex; flex-direction: column; padding: 0 0 0 4px; overflow: hidden; box-shadow: inset 0 5px #fff; }
.bar {
  flex: none;
  height: 30px;
  display: flex;
  align-items: center;
  border-left: 1px solid #aaa;
  border-top: 1px solid #aaa;
  background: #ececec;
}
.bar:first-child { margin-top: 6px; }
.bar:nth-child(3) { height: 34px; border-top: 2px solid #b0b0b0; border-bottom: 1px solid #aaa; }
.grip { width: 7px; height: 22px; flex: none; border: 1px solid #aaa; border-left: 0; border-top: 0; margin-right: 6px; box-shadow: 1px 0 #fff; }
.bar .sep { height: 22px; }
.ib { width: 32px; height: 24px; flex: none; display: flex; align-items: center; justify-content: center; }
.ib.n { width: 31px; }
.ib.lit { background: #f5f5f5; }
.bar .off .ic, .ib .ic { filter: drop-shadow(1px 1px 0 #fff); }
.flip { transform: scaleX(-1); }
.ltr { color: #9b9b9b; font: bold 18px/20px "Liberation Serif", serif; text-shadow: 1px 1px 0 #fff; }
.frac { width: 21px; height: 21px; border: 1px solid #9b9b9b; border-radius: 50%; color: #9b9b9b; font: 11px/18px "Liberation Sans", sans-serif; }
.cb {
  height: 23px;
  appearance: none;
  border: 2px solid #aeaeae;
  border-radius: 0;
  padding: 0 2px;
  color: #9b9b9b;
  line-height: 18px;
  background: conic-gradient(from -45deg at 50% 100%, #9b9b9b 90deg, transparent 0) right 6px center / 10px 5px no-repeat, #ececec;
}
.font { position: relative; display: flex; }
.font .ic { position: absolute; left: 2px; top: 1px; }
.c-font { width: 112px; padding-left: 22px; }
.c-size { width: 73px; margin-right: 3px; }
.c-zoom { width: 84px; color: #000; background: conic-gradient(from -45deg at 50% 100%, #000 90deg, transparent 0) right 6px center / 10px 5px no-repeat, linear-gradient(#ececec, #ececec) right / 20px 100% no-repeat, #fff; }
.c-line { width: 100px; background: conic-gradient(from -45deg at 50% 100%, #9b9b9b 90deg, transparent 0) right 6px center / 10px 5px no-repeat, linear-gradient(#9b9b9b, #9b9b9b) 6px 8px / 66px 1px no-repeat, #ececec; }
.lb { width: 94px; height: 24px; flex: none; display: flex; align-items: center; justify-content: center; }
.lb.short { width: 80px; }
.lb.last { width: 104px; }
.lb .ic { width: 18px; height: 18px; }
.phi { width: 20px; font: bold 18px/20px "Liberation Serif", serif; }
.no { width: 21px; font-size: 20px; }
.xiang { width: 20px; color: #e01010; font-size: 18px; font-style: italic; }

.sheet { flex: 1; min-height: 0; overflow: hidden; border-left: 1px solid #888; background: linear-gradient(#e0e0e0, #e0e0e0) left / 938px 100% no-repeat, #ededed; }
table { width: 930px; table-layout: fixed; border-collapse: separate; border-spacing: 0; line-height: 15px; }
th, td { padding: 0; border-right: 1px solid #222; border-bottom: 1px solid #222; background: #dedede; overflow: hidden; text-align: center; }
td { padding-bottom: 2px; }
th { background: #f0f0f0; border-color: #8c8c8c; font: bold 14px/16px "DejaVu Serif", serif; }
thead th { height: 25px; font: 16px/20px "Liberation Serif", serif; border-top: 1px solid #888; border-right-color: #aaa; }
.corner { text-align: right; }
.corner svg { display: block; margin: 6px 7px 0 auto; }
tbody th div { height: 100%; overflow: hidden; }
.strip { border-left: 2px solid #222; border-right: 1px solid #222; border-bottom: 0; background: #ececec; }
.strip.dark { border-right: 3px solid #222; background: #ccc; }
.soft { border-color: #d2d1c8; }
.top { border-bottom: 2px solid #000; border-right: 0; }
.o { background: #f0c8a4; }
.w { background: #fff; }
.e { border-right: 2px solid #000; }
.nr { border-right-color: #d2d1c8; }
.nb { border-bottom-color: #d2d1c8; }
.l { text-align: left; padding: 0 3px 2px; }
.vert { width: 15px; margin: 0 auto; }
.code { font-size: 20px; line-height: 24px; }
.title { font-size: 27px; line-height: 28px; padding-bottom: 4px; }
.logo { padding: 0; }
.logo svg { display: block; margin: 0 auto; }
.w7 { width: 7px; } .w21 { width: 21px; } .w26 { width: 26px; } .w27 { width: 27px; } .w28 { width: 28px; }
.w29 { width: 29px; } .w30 { width: 30px; } .w31 { width: 31px; } .w34 { width: 34px; } .w35 { width: 35px; }
.w36 { width: 36px; } .w38 { width: 38px; } .w40 { width: 40px; } .w41 { width: 41px; }
.h5 { height: 5px; } .h6 { height: 6px; } .h14 { height: 14px; } .h31 { height: 31px; } .h37 { height: 37px; }
.h38 { height: 38px; } .h42 { height: 42px; } .h53 { height: 53px; } .h62 { height: 62px; } .h63 { height: 63px; }
.h94 { height: 94px; } .h288 { height: 288px; } .h289 { height: 289px; }
.h5 div { height: 4px; line-height: 8px; }
.h6 div { height: 5px; line-height: 4px; }
.h14 div { height: 13px; line-height: 14px; }

.sheettabs { flex: none; height: 7px; display: flex; overflow: hidden; border-top: 1px solid #999; border-left: 1px solid #999; }
.sheettabs > i { width: 21px; border-right: 1px solid #aaa; }
.stab { position: relative; width: 72px; height: 16px; }
.stab svg { display: block; }
.stab span { position: absolute; left: 18px; top: 0; font-size: 13px; line-height: 16px; }
```
